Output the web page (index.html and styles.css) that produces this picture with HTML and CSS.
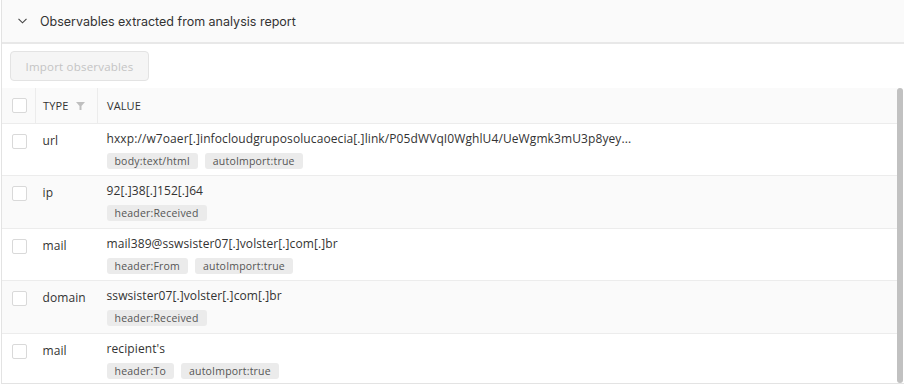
FILE: index.html
```html
<!DOCTYPE html>
<html lang="en">
<head>
  <meta charset="UTF-8" />
  <title>Observables</title>
  <link rel="stylesheet" href="styles.css">
</head>
<body>
  <div class="panel">
    <div class="panel-head">
      <svg class="chevron" width="9" height="6" viewBox="0 0 9 6"><path d="M0.5 0.8 L4.5 4.8 L8.5 0.8" fill="none" stroke="#444" stroke-width="1.1"/></svg>
      <span class="panel-title">Observables extracted from analysis report</span>
    </div>
    <div class="panel-body">
      <button class="import-btn" disabled>Import observables</button>
      <div class="table-wrap">
        <table class="obs-table">
          <thead>
            <tr>
              <th class="col-check"><span class="check"></span></th>
              <th class="col-type">TYPE
                <svg class="filter" width="9" height="8" viewBox="0 0 9 8"><path d="M0 0 H9 L5.5 4 V8 H3.5 V4 Z" fill="#bfbfbf"/></svg>
              </th>
              <th class="col-value">VALUE</th>
            </tr>
          </thead>
          <tbody id="obsBody"></tbody>
        </table>
        <div class="scrollbar"><div class="thumb"></div></div>
      </div>
    </div>
  </div>

  <script>
    const rows = [
      { type: 'url', value: 'hxxp://w7oaer[.]infocloudgruposolucaoecia[.]link/P05dWVqI0WghlU4/UeWgmk3mU3p8yey...', tags: ['body:text/html', 'autoImport:true'] },
      { type: 'ip', value: '92[.]38[.]152[.]64', tags: ['header:Received'] },
      { type: 'mail', value: 'mail389@sswsister07[.]volster[.]com[.]br', tags: ['header:From', 'autoImport:true'] },
      { type: 'domain', value: 'sswsister07[.]volster[.]com[.]br', tags: ['header:Received'] },
      { type: 'mail', value: "recipient's", tags: ['header:To', 'autoImport:true'] }
    ];

    const body = document.getElementById('obsBody');
    rows.forEach(r => {
      const tr = document.createElement('tr');
      tr.innerHTML = `
        <td class="col-check"><span class="check"></span></td>
        <td class="col-type">${r.type}</td>
        <td class="col-value">
          <div class="value">${r.value}</div>
          <div class="tags">${r.tags.map(t => `<span class="tag">${t}</span>`).join('')}</div>
        </td>
      `;
      body.appendChild(tr);
    });
  </script>
</body>
</html>
```

FILE: styles.css
```css
body {
  margin: 0;
  font-family: "Open Sans", sans-serif;
  color: #333;
  background: #fff;
}
.panel {
  margin-left: 1px;
  border-left: 1px solid #e3e3e3;
  border-bottom: 1px solid #e3e3e3;
  width: 902px;
}
.panel-head {
  height: 42px;
  background: #fafafa;
  border-bottom: 2px solid #e8e8e8;
  display: flex;
  align-items: center;
  padding-left: 16px;
  font-family: Inter, sans-serif;
  font-size: 12.5px;
  color: #333;
}
.chevron {
  margin-right: 13px;
}
.panel-body {
  padding-top: 7px;
}
.import-btn {
  display: block;
  margin-left: 8px;
  height: 30px;
  width: 139px;
  border: 1px solid #e3e3e3;
  background: #f5f5f5;
  border-radius: 4px;
  color: #c4c4c4;
  font-family: "Open Sans", sans-serif;
  font-size: 11.5px;
  letter-spacing: 0.2px;
}
.table-wrap {
  margin-top: 7px;
  height: 295px;
  overflow: hidden;
  display: flex;
}
.obs-table {
  flex: 1;
  align-self: flex-start;
  border-collapse: collapse;
  font-size: 12px;
  letter-spacing: 0.1px;
  table-layout: fixed;
}
th, td {
  text-align: left;
  vertical-align: top;
  padding: 0 8px;
}
th {
  height: 35px;
  box-sizing: border-box;
  background: #fafafa;
  font-weight: 400;
  font-size: 11px;
  vertical-align: middle;
  border-bottom: 1px solid #ececec;
}
th + th {
  border-left: 1px solid #ececec;
}
td {
  padding-top: 6px;
  padding-bottom: 6.6px;
  border-bottom: 1px solid #ececec;
}
tbody tr:nth-child(even) {
  background: #fafafa;
}
.col-check {
  width: 15px;
  padding-left: 10px;
}
td.col-check {
  padding-top: 10px;
}
.col-type {
  width: 47px;
  padding-top: 8px;
}
th.col-type {
  padding-top: 0;
  padding-left: 7px;
}
td.col-type {
  padding-left: 7px;
}
.col-value {
  padding-left: 9px;
}
.check {
  display: block;
  width: 13px;
  height: 13px;
  border: 1px solid #d9d9d9;
  border-radius: 2px;
  background: #fff;
}
.filter {
  margin-left: 5px;
}
.value {
  line-height: 18px;
  white-space: nowrap;
}
.tags {
  margin-top: 5px;
  display: flex;
  gap: 7px;
  height: 16px;
}
.tag {
  background: #ebebeb;
  color: #555;
  font-size: 10.5px;
  letter-spacing: 0.2px;
  line-height: 16px;
  padding: 0 8px;
  border-radius: 3px;
}
.scrollbar {
  width: 6px;
  padding-right: 1px;
}
.thumb {
  height: 100%;
  background: #c1c1c1;
  border-radius: 3px;
}
```
